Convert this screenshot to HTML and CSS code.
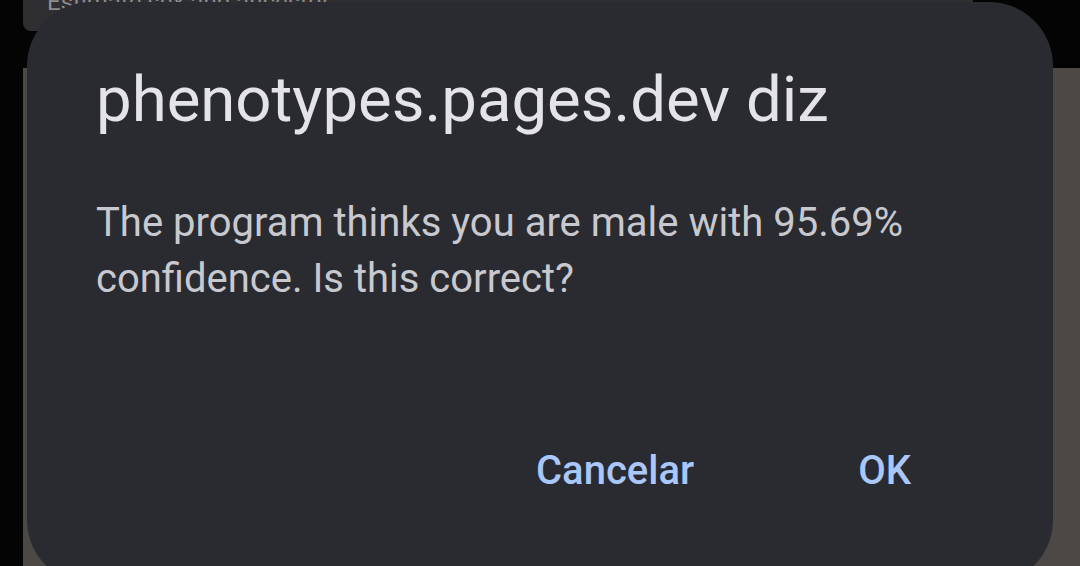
FILE: index.html
```html
<!DOCTYPE html>
<html lang="pt">
<head>
    <meta charset="UTF-8">
    <meta name="viewport" content="width=device-width, initial-scale=1.0">
    <title>phenotypes.pages.dev</title>
    <link rel="stylesheet" href="styles.css">
</head>
<body>
    <div class="page">
        <div class="page-tab"><span>Estimate sex and ancestry</span></div>
        <div class="page-body"></div>
    </div>

    <div class="dialog" role="dialog">
        <h1 class="dialog-title">phenotypes.pages.dev diz</h1>
        <p class="dialog-message">The program thinks you are male with 95.69% confidence. Is this correct?</p>
        <div class="dialog-actions">
            <button class="dialog-button">Cancelar</button>
            <button class="dialog-button">OK</button>
        </div>
    </div>
</body>
</html>
```

FILE: styles.css
```css
body {
    margin: 0;
    height: 566px;
    overflow: hidden;
    background-color: #040404;
    font-family: Roboto, "Noto Sans", sans-serif;
    position: relative;
}
.page {
    display: flex;
    flex-direction: column;
    height: 100%;
    padding-left: 23px;
}
.page-tab {
    height: 31px;
    width: 950px;
    background-color: #2f2f32;
    border-bottom-left-radius: 8px;
    overflow: hidden;
}
.page-tab span {
    display: block;
    margin: -12px 0 0 24px;
    font-size: 24px;
    color: #8d8d90;
}
.page-body {
    flex: 1;
    margin-top: 37px;
    background-color: #4b4846;
}
.dialog {
    position: absolute;
    top: 2px;
    left: 27px;
    width: 1026px;
    height: 582px;
    box-sizing: border-box;
    padding: 62px 69px 0;
    background-color: #2a2b30;
    border-radius: 64px;
}
.dialog-title {
    margin: 0;
    font-size: 63.5px;
    font-weight: 400;
    line-height: 72px;
    color: #e3e3e8;
}
.dialog-message {
    margin: 59px 0 0;
    width: 840px;
    font-size: 40px;
    line-height: 56px;
    color: #c8c9cf;
}
.dialog-actions {
    display: flex;
    justify-content: flex-end;
    gap: 164px;
    margin: 136px 73px 0 0;
}
.dialog-button {
    padding: 0;
    border: none;
    background: none;
    font-family: Roboto, "Noto Sans", sans-serif;
    font-size: 40px;
    font-weight: 500;
    line-height: 56px;
    color: #a9c7fa;
    cursor: pointer;
}
```
